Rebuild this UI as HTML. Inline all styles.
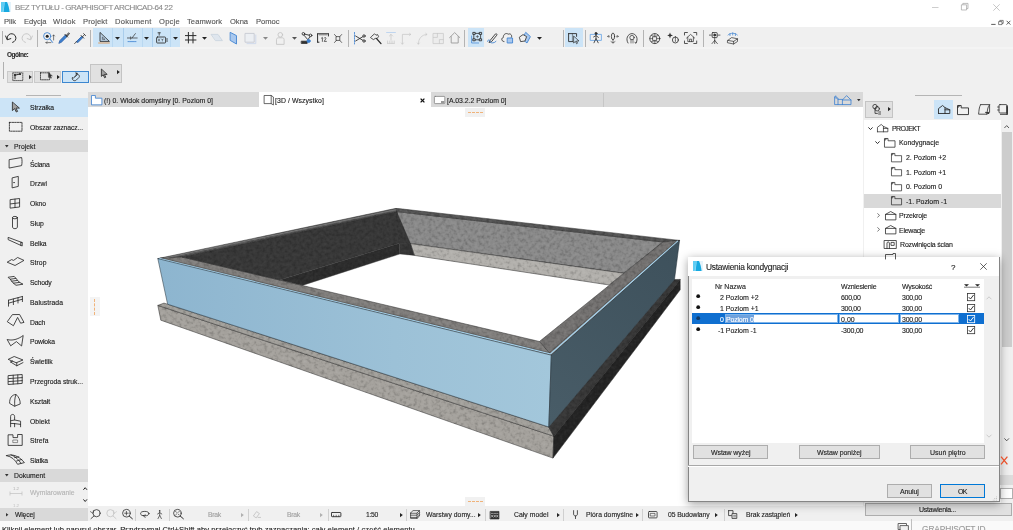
<!DOCTYPE html>
<html lang="pl"><head><meta charset="utf-8"><title>BEZ TYTUŁU - GRAPHISOFT ARCHICAD-64 22</title>
<style>
html,body{margin:0;padding:0;}
body{width:1013px;height:530px;overflow:hidden;position:relative;background:#f0f0f0;font-family:"Liberation Sans", sans-serif;}
body>div,body>svg,body>span{position:absolute;}
.t{white-space:pre;-webkit-text-stroke:0.12px currentColor;will-change:transform;}
svg{overflow:visible;}
</style></head><body>
<div style="left:0px;top:0px;width:1013px;height:27px;background:#ffffff;"></div>
<div style="left:0px;top:27px;width:1013px;height:21px;background:#f0f0f0;"></div>
<div style="left:0px;top:47.3px;width:1013px;height:2.2px;background:#f4f4f4;"></div>
<div style="left:0px;top:49px;width:1013px;height:43px;background:#f0f0f0;"></div>
<div style="left:88px;top:107px;width:775px;height:399.3px;background:#ffffff;"></div>
<div style="left:88px;top:92px;width:775px;height:15px;background:#d9d9d9;"></div>
<div style="left:259px;top:92px;width:172px;height:15px;background:#ffffff;"></div>
<div style="left:0px;top:90px;width:88px;height:432px;background:#f0f0f0;"></div>
<div style="left:863px;top:90px;width:150px;height:432px;background:#f0f0f0;"></div>
<div style="left:864px;top:120px;width:137px;height:385px;background:#ffffff;"></div>
<div style="left:1001px;top:120px;width:12px;height:385px;background:#f0f0f0;"></div>
<div style="left:88px;top:506.3px;width:775px;height:15.7px;background:#f0f0f0;"></div>
<div style="left:0px;top:520.8px;width:1013px;height:9.2px;background:#fafafa;"></div>
<span class="t" style="left:14.6px;top:2.80px;font-size:8px;line-height:9.60px;color:#8a8a8a;letter-spacing:-0.436px;">BEZ TYTUŁU - GRAPHISOFT ARCHICAD-64 22</span>
<span class="t" style="left:4px;top:16.74px;font-size:7.6px;line-height:9.12px;color:#555;letter-spacing:-0.062px;">Plik</span>
<span class="t" style="left:23.5px;top:16.74px;font-size:7.6px;line-height:9.12px;color:#555;letter-spacing:-0.049px;">Edycja</span>
<span class="t" style="left:53px;top:16.74px;font-size:7.6px;line-height:9.12px;color:#555;letter-spacing:0.378px;">Widok</span>
<span class="t" style="left:83px;top:16.74px;font-size:7.6px;line-height:9.12px;color:#555;letter-spacing:0.123px;">Projekt</span>
<span class="t" style="left:115px;top:16.74px;font-size:7.6px;line-height:9.12px;color:#555;letter-spacing:0.234px;">Dokument</span>
<span class="t" style="left:158.5px;top:16.74px;font-size:7.6px;line-height:9.12px;color:#555;letter-spacing:0.231px;">Opcje</span>
<span class="t" style="left:187.4px;top:16.74px;font-size:7.6px;line-height:9.12px;color:#555;letter-spacing:0.074px;">Teamwork</span>
<span class="t" style="left:230px;top:16.74px;font-size:7.6px;line-height:9.12px;color:#555;letter-spacing:-0.039px;">Okna</span>
<span class="t" style="left:255.6px;top:16.74px;font-size:7.6px;line-height:9.12px;color:#555;letter-spacing:-0.048px;">Pomoc</span>
<div style="left:0px;top:97.5px;width:88px;height:19px;background:#cce4f7;"></div>
<span class="t" style="left:30px;top:104.32px;font-size:6.8px;line-height:8.16px;color:#1a1a1a;letter-spacing:-0.070px;">Strzałka</span>
<span class="t" style="left:30px;top:124.32px;font-size:6.8px;line-height:8.16px;color:#1a1a1a;letter-spacing:-0.083px;">Obszar zaznacz...</span>
<div style="left:0px;top:139.8px;width:88px;height:12.4px;background:#d9d9d9;"></div>
<span class="t" style="left:14px;top:142.82px;font-size:6.8px;line-height:8.16px;color:#1a1a1a;letter-spacing:0.049px;">Projekt</span>
<span class="t" style="left:30px;top:160.62px;font-size:6.8px;line-height:8.16px;color:#1a1a1a;letter-spacing:-0.216px;">Ściana</span>
<span class="t" style="left:30px;top:180.38px;font-size:6.8px;line-height:8.16px;color:#1a1a1a;letter-spacing:0.000px;">Drzwi</span>
<span class="t" style="left:30px;top:200.14px;font-size:6.8px;line-height:8.16px;color:#1a1a1a;letter-spacing:-0.062px;">Okno</span>
<span class="t" style="left:30px;top:219.90px;font-size:6.8px;line-height:8.16px;color:#1a1a1a;letter-spacing:0.098px;">Słup</span>
<span class="t" style="left:30px;top:239.66px;font-size:6.8px;line-height:8.16px;color:#1a1a1a;letter-spacing:-0.103px;">Belka</span>
<span class="t" style="left:30px;top:259.42px;font-size:6.8px;line-height:8.16px;color:#1a1a1a;letter-spacing:0.050px;">Strop</span>
<span class="t" style="left:30px;top:279.18px;font-size:6.8px;line-height:8.16px;color:#1a1a1a;letter-spacing:-0.195px;">Schody</span>
<span class="t" style="left:30px;top:298.94px;font-size:6.8px;line-height:8.16px;color:#1a1a1a;letter-spacing:0.050px;">Balustrada</span>
<span class="t" style="left:30px;top:318.70px;font-size:6.8px;line-height:8.16px;color:#1a1a1a;letter-spacing:-0.219px;">Dach</span>
<span class="t" style="left:30px;top:338.46px;font-size:6.8px;line-height:8.16px;color:#1a1a1a;letter-spacing:-0.100px;">Powłoka</span>
<span class="t" style="left:30px;top:358.22px;font-size:6.8px;line-height:8.16px;color:#1a1a1a;letter-spacing:-0.068px;">Świetlik</span>
<span class="t" style="left:30px;top:377.98px;font-size:6.8px;line-height:8.16px;color:#1a1a1a;letter-spacing:-0.036px;">Przegroda struk...</span>
<span class="t" style="left:30px;top:397.74px;font-size:6.8px;line-height:8.16px;color:#1a1a1a;letter-spacing:-0.058px;">Kształt</span>
<span class="t" style="left:30px;top:417.50px;font-size:6.8px;line-height:8.16px;color:#1a1a1a;letter-spacing:0.057px;">Obiekt</span>
<span class="t" style="left:30px;top:437.26px;font-size:6.8px;line-height:8.16px;color:#1a1a1a;letter-spacing:0.060px;">Strefa</span>
<span class="t" style="left:30px;top:457.02px;font-size:6.8px;line-height:8.16px;color:#1a1a1a;letter-spacing:-0.148px;">Siatka</span>
<div style="left:0px;top:468.7px;width:88px;height:12.9px;background:#d9d9d9;"></div>
<div style="left:0px;top:507.9px;width:87.7px;height:12.9px;background:#d9d9d9;"></div>
<span class="t" style="left:14.1px;top:472.12px;font-size:6.8px;line-height:8.16px;color:#1a1a1a;letter-spacing:0.039px;">Dokument</span>
<span class="t" style="left:30px;top:489.22px;font-size:6.8px;line-height:8.16px;color:#b4b4b4;letter-spacing:0.007px;">Wymiarowanie</span>
<span class="t" style="left:14.5px;top:511.02px;font-size:6.8px;line-height:8.16px;color:#1a1a1a;letter-spacing:-0.151px;">Więcej</span>
<span class="t" style="left:104px;top:96.76px;font-size:6.9px;line-height:8.28px;color:#222;letter-spacing:0.018px;">(!) 0. Widok domyślny [0. Poziom 0]</span>
<span class="t" style="left:275px;top:96.76px;font-size:6.9px;line-height:8.28px;color:#222;letter-spacing:0.076px;">[3D / Wszystko]</span>
<span class="t" style="left:446.5px;top:96.76px;font-size:6.9px;line-height:8.28px;color:#222;letter-spacing:-0.034px;">[A.03.2.2 Poziom 0]</span>
<span class="t" style="left:2px;top:524.64px;font-size:7.6px;line-height:9.12px;color:#222;letter-spacing:0.048px;">Kliknij element lub narysuj obszar. Przytrzymaj Ctrl+Shift aby przełączyć tryb zaznaczania: cały element / część elementu.</span>
<svg style="left:0px;top:0px;" width="1013" height="530" viewBox="0 0 1013 530"><defs><linearGradient id="gb" gradientUnits="userSpaceOnUse" x1="158" y1="0" x2="552" y2="0"><stop offset="0" stop-color="#8db5cf"/><stop offset="0.6" stop-color="#9cc1d7"/><stop offset="1" stop-color="#a3c7db"/></linearGradient><linearGradient id="gr" gradientUnits="userSpaceOnUse" x1="550" y1="420" x2="680" y2="250"><stop offset="0" stop-color="#485c67"/><stop offset="1" stop-color="#3e515c"/></linearGradient><filter id="tex" color-interpolation-filters="sRGB" x="0" y="0" width="100%" height="100%" filterUnits="objectBoundingBox"><feTurbulence type="fractalNoise" baseFrequency="0.28" numOctaves="2" seed="7" result="n"/><feColorMatrix in="n" type="matrix" values="0 0 0 0 0  0 0 0 0 0  0 0 0 0 0  -0.5 0 0 0 0.25" result="a"/><feComposite in="a" in2="SourceGraphic" operator="in" result="d"/><feColorMatrix in="n" type="matrix" values="0 0 0 0 1  0 0 0 0 1  0 0 0 0 1  0.24 0 0 0 -0.12" result="l"/><feComposite in="l" in2="SourceGraphic" operator="in" result="l2"/><feMerge><feMergeNode in="SourceGraphic"/><feMergeNode in="d"/><feMergeNode in="l2"/></feMerge></filter><filter id="texd" color-interpolation-filters="sRGB" x="0" y="0" width="100%" height="100%"><feTurbulence type="fractalNoise" baseFrequency="0.3" numOctaves="2" seed="11" result="n"/><feColorMatrix in="n" type="matrix" values="0 0 0 0 0  0 0 0 0 0  0 0 0 0 0  -0.5 0 0 0 0.25" result="a"/><feComposite in="a" in2="SourceGraphic" operator="in" result="d"/><feColorMatrix in="n" type="matrix" values="0 0 0 0 1  0 0 0 0 1  0 0 0 0 1  0.1 0 0 0 -0.05" result="l"/><feComposite in="l" in2="SourceGraphic" operator="in" result="l2"/><feMerge><feMergeNode in="SourceGraphic"/><feMergeNode in="d"/><feMergeNode in="l2"/></feMerge></filter></defs><g filter="url(#tex)"><polygon points="157.8,305.4 553.8,436.2 553.0,458.1 160.8,320.2" fill="#a4a19c" stroke="#2a2a2a" stroke-width="0.5" stroke-linejoin="round" /><polygon points="157.8,305.4 164.0,303.1 167.6,304.2 548.8,427.0 553.8,436.2" fill="#a19f9a" stroke="#2a2a2a" stroke-width="0.5" stroke-linejoin="round" /><polygon points="396.7,211.6 663.0,242.0 623.7,273.2 410.5,243.6 399.5,243.3" fill="#898989" stroke="#2a2a2a" stroke-width="0.5" stroke-linejoin="round" /><polygon points="410.5,243.6 623.7,273.2 609.2,285.0 414.3,255.4" fill="#b2b0ac" stroke="#2a2a2a" stroke-width="0.5" stroke-linejoin="round" /><polygon points="157.8,258.6 396.2,208.3 396.7,211.6 182.0,257.0" fill="#565656" stroke="#2a2a2a" stroke-width="0.5" stroke-linejoin="round" /><polygon points="396.2,208.3 679.6,240.4 663.0,242.0 396.7,211.6" fill="#545454" stroke="#2a2a2a" stroke-width="0.5" stroke-linejoin="round" /><polygon points="551.3,355.2 679.6,240.4 663.0,242.0 539.4,341.5" fill="#737170" stroke="#2a2a2a" stroke-width="0.5" stroke-linejoin="round" /><polygon points="157.8,258.6 551.3,355.2 539.4,341.5 182.0,257.0" fill="#807e7c" stroke="#2a2a2a" stroke-width="0.5" stroke-linejoin="round" /></g><g filter="url(#texd)"><polygon points="548.8,427.0 553.8,436.2 680.2,279.4 674.5,279.5" fill="#383838" stroke="#2a2a2a" stroke-width="0.5" stroke-linejoin="round" /><polygon points="553.8,436.2 680.2,279.4 680.2,289.8 553.0,458.1" fill="#242424" stroke="#2a2a2a" stroke-width="0.5" stroke-linejoin="round" /><polygon points="182.0,257.0 396.7,211.6 399.5,243.3 279.5,279.9" fill="#383838" stroke="#2a2a2a" stroke-width="0.5" stroke-linejoin="round" /><polygon points="279.5,279.9 399.5,243.3 399.8,254.0 302.5,285.4" fill="#2d2d2d" stroke="#4a4a4a" stroke-width="0.4" stroke-linejoin="round" /><polygon points="396.7,211.6 410.5,243.6 399.5,243.3" fill="#383838" stroke="#2a2a2a" stroke-width="0.3" stroke-linejoin="round" /><polygon points="399.5,243.3 410.5,243.6 414.3,255.4 399.8,254.0" fill="#353535" stroke="#2a2a2a" stroke-width="0.3" stroke-linejoin="round" /></g><polyline points="163.9,258.2 396.4,209.6" stroke="#858585" stroke-width="0.7" fill="none"/><polyline points="159.3,258.5 550.4,353.9 678.0,240.9" stroke="#a4cfe8" stroke-width="1.4" fill="none" stroke-linejoin="round"/><polyline points="160.3,257.5 549.5,352.6 676.3,241.2" stroke="#2f2f2f" stroke-width="0.35" fill="none" stroke-linejoin="round"/><polygon points="157.8,258.6 551.3,355.2 548.8,427.0 167.6,304.2" fill="url(#gb)" stroke="#1f2a33" stroke-width="0.5" stroke-linejoin="round" /><polygon points="551.3,355.2 679.6,240.4 674.5,279.5 548.8,427.0" fill="url(#gr)" stroke="#1f2a33" stroke-width="0.5" stroke-linejoin="round" /></svg>
<div style="left:914.7px;top:95px;width:47.7px;height:0.8px;background:#b5b5b5;"></div>
<div style="left:864.5px;top:100.6px;width:28px;height:17.8px;background:#e1e1e1;border:0.5px solid #c4c4c4;box-sizing:border-box;"></div>
<div style="left:933.7px;top:99.8px;width:19.2px;height:19.2px;background:#cce4f7;"></div>
<div style="left:864px;top:194px;width:137px;height:13.5px;background:#d9d9d9;"></div>
<span class="t" style="left:892px;top:125.00px;font-size:7px;line-height:8.40px;color:#1a1a1a;letter-spacing:-0.614px;">PROJEKT</span>
<span class="t" style="left:899px;top:139.00px;font-size:7px;line-height:8.40px;color:#1a1a1a;letter-spacing:-0.044px;">Kondygnacje</span>
<span class="t" style="left:906px;top:154.00px;font-size:7px;line-height:8.40px;color:#1a1a1a;letter-spacing:-0.089px;">2. Poziom +2</span>
<span class="t" style="left:906px;top:168.50px;font-size:7px;line-height:8.40px;color:#1a1a1a;letter-spacing:-0.089px;">1. Poziom +1</span>
<span class="t" style="left:906px;top:183.10px;font-size:7px;line-height:8.40px;color:#1a1a1a;letter-spacing:-0.088px;">0. Poziom 0</span>
<span class="t" style="left:906px;top:197.50px;font-size:7px;line-height:8.40px;color:#1a1a1a;letter-spacing:-0.048px;">-1. Poziom -1</span>
<span class="t" style="left:899px;top:212.30px;font-size:7px;line-height:8.40px;color:#1a1a1a;letter-spacing:-0.175px;">Przekroje</span>
<span class="t" style="left:899px;top:226.50px;font-size:7px;line-height:8.40px;color:#1a1a1a;letter-spacing:-0.252px;">Elewacje</span>
<span class="t" style="left:899.5px;top:241.10px;font-size:7px;line-height:8.40px;color:#1a1a1a;letter-spacing:-0.167px;">Rozwinięcia ścian</span>
<div style="left:1001.5px;top:132.3px;width:10px;height:214.4px;background:#cdcdcd;"></div>
<div style="left:865px;top:502.5px;width:146.5px;height:13px;background:#e1e1e1;border:0.5px solid #adadad;box-sizing:border-box;"></div>
<span class="t" style="left:919.3px;top:505.90px;font-size:7px;line-height:8.40px;color:#1a1a1a;letter-spacing:-0.237px;">Ustawienia...</span>
<span class="t" style="left:922.3px;top:523.86px;font-size:8.4px;line-height:10.08px;color:#9a9a9a;letter-spacing:-0.123px;">GRAPHISOFT ID</span>
<div style="left:911.3px;top:519px;width:0.7px;height:11px;background:#c0c0c0;"></div>
<div style="left:1000px;top:474.5px;width:13px;height:10px;background:#dcdcdc;"></div>
<div style="left:1000px;top:487.5px;width:13px;height:11px;background:#ffffff;border:0.5px solid #b0b0b0;box-sizing:border-box;"></div>
<span class="t" style="left:207.7px;top:510.82px;font-size:6.8px;line-height:8.16px;color:#a0a0a0;letter-spacing:-0.246px;">Brak</span>
<span class="t" style="left:287px;top:510.82px;font-size:6.8px;line-height:8.16px;color:#a0a0a0;letter-spacing:-0.246px;">Brak</span>
<span class="t" style="left:366.2px;top:510.82px;font-size:6.8px;line-height:8.16px;color:#222;letter-spacing:-0.309px;">1:50</span>
<span class="t" style="left:426px;top:510.82px;font-size:6.8px;line-height:8.16px;color:#222;letter-spacing:0.014px;">Warstwy domy...</span>
<span class="t" style="left:514px;top:510.82px;font-size:6.8px;line-height:8.16px;color:#222;letter-spacing:0.050px;">Cały model</span>
<span class="t" style="left:586px;top:510.82px;font-size:6.8px;line-height:8.16px;color:#222;letter-spacing:0.010px;">Pióra domyślne</span>
<span class="t" style="left:668px;top:510.82px;font-size:6.8px;line-height:8.16px;color:#222;letter-spacing:-0.100px;">05 Budowlany</span>
<span class="t" style="left:745.8px;top:510.82px;font-size:6.8px;line-height:8.16px;color:#222;letter-spacing:-0.055px;">Brak zastąpień</span>
<div style="left:135.4px;top:508.5px;width:0.7px;height:12px;background:#d0d0d0;"></div>
<div style="left:169.3px;top:508.5px;width:0.7px;height:12px;background:#d0d0d0;"></div>
<div style="left:247.9px;top:508.5px;width:0.7px;height:12px;background:#d0d0d0;"></div>
<div style="left:327.6px;top:508.5px;width:0.7px;height:12px;background:#d0d0d0;"></div>
<div style="left:406.2px;top:508.5px;width:0.7px;height:12px;background:#d0d0d0;"></div>
<div style="left:485px;top:508.5px;width:0.7px;height:12px;background:#d0d0d0;"></div>
<div style="left:563.4px;top:508.5px;width:0.7px;height:12px;background:#d0d0d0;"></div>
<div style="left:642px;top:508.5px;width:0.7px;height:12px;background:#d0d0d0;"></div>
<div style="left:723.6px;top:508.5px;width:0.7px;height:12px;background:#d0d0d0;"></div>
<div style="left:687.5px;top:256.5px;width:312px;height:245px;background:#f0f0f0;border:0.8px solid #858585;box-sizing:border-box;box-shadow:0 2px 9px rgba(0,0,0,0.38);"></div>
<div style="left:688.3px;top:257.3px;width:310.4px;height:18.7px;background:#ffffff;"></div>
<svg style="left:692.8px;top:261.2px;" width="10" height="10" viewBox="0 0 10 10"><rect x="0" y="0" width="10" height="10" fill="#e4f3fb"/><path d="M0 0H3.8L1.6 10H0Z" fill="#5fcdf4"/><path d="M3.8 0H6C7.4 3 8.2 6.4 8.6 10H1.6Z" fill="#17a9e0"/><path d="M3.8 0L2.6 10H1.6Z" fill="#9be2fa"/></svg>
<span class="t" style="left:705.8px;top:262.16px;font-size:8.4px;line-height:10.08px;color:#222;letter-spacing:-0.242px;">Ustawienia kondygnacji</span>
<span class="t" style="left:951.4px;top:262.90px;font-size:8px;line-height:9.60px;color:#222;">?</span>
<svg style="left:980px;top:263.3px;" width="7" height="7" viewBox="0 0 7 7"><path d="M0.3 0.3L6.7 6.7M6.7 0.3L0.3 6.7" stroke="#222" stroke-width="0.7" fill="none"/></svg>
<div style="left:692px;top:279px;width:292px;height:163.5px;background:#ffffff;"></div>
<span class="t" style="left:715px;top:282.70px;font-size:7px;line-height:8.40px;color:#222;letter-spacing:0.008px;">Nr Nazwa</span>
<span class="t" style="left:841.2px;top:282.70px;font-size:7px;line-height:8.40px;color:#222;letter-spacing:-0.214px;">Wzniesienie</span>
<span class="t" style="left:901.9px;top:282.70px;font-size:7px;line-height:8.40px;color:#222;letter-spacing:-0.218px;">Wysokość</span>
<svg style="left:964px;top:283px;" width="16" height="5" viewBox="0 0 16 5"><path d="M0 1.2H5L2.5 3.4ZM11 1.2H16L13.5 3.4Z" fill="#222"/><path d="M0 4.2H16" stroke="#222" stroke-width="0.6"/></svg>
<div style="left:692px;top:313.3px;width:292px;height:10.6px;background:#0f6fd0;"></div>
<div style="left:724.5px;top:313.8px;width:113.5px;height:9.6px;background:#ffffff;border:0.5px solid #7eb4ea;box-sizing:border-box;"></div>
<div style="left:839px;top:313.8px;width:59.5px;height:9.6px;background:#ffffff;border:0.5px solid #7eb4ea;box-sizing:border-box;"></div>
<div style="left:900px;top:313.8px;width:58.5px;height:9.6px;background:#ffffff;border:0.5px solid #7eb4ea;box-sizing:border-box;"></div>
<div style="left:725.5px;top:315px;width:28.5px;height:7.6px;background:#6fa2dd;"></div>
<span class="t" style="left:720px;top:315.90px;font-size:7px;line-height:8.40px;color:#ffffff;">0</span>
<span class="t" style="left:725.8px;top:315.90px;font-size:7px;line-height:8.40px;color:#ffffff;letter-spacing:-0.186px;">Poziom 0</span>
<svg style="left:696px;top:294.40000000000003px;" width="4.4" height="4.4" viewBox="0 0 4.4 4.4"><circle cx="2.2" cy="2.2" r="1.9" fill="#111"/></svg>
<span class="t" style="left:719.5px;top:294.00px;font-size:7px;line-height:8.40px;color:#222;letter-spacing:-0.055px;">2 Poziom +2</span>
<span class="t" style="left:841.2px;top:294.00px;font-size:7px;line-height:8.40px;color:#222;letter-spacing:-0.320px;">600,00</span>
<span class="t" style="left:901.9px;top:294.00px;font-size:7px;line-height:8.40px;color:#222;letter-spacing:-0.254px;">300,00</span>
<svg style="left:967.2px;top:293.2px;" width="8.2" height="8.2" viewBox="0 0 8.2 8.2"><rect x="0.5" y="0.5" width="7.2" height="7.2" fill="#fff" stroke="#333" stroke-width="0.8"/><path d="M1.8 4.2L3.5 6L6.6 2" stroke="#333" stroke-width="1" fill="none"/></svg>
<svg style="left:696px;top:305.40000000000003px;" width="4.4" height="4.4" viewBox="0 0 4.4 4.4"><circle cx="2.2" cy="2.2" r="1.9" fill="#111"/></svg>
<span class="t" style="left:719.5px;top:305.00px;font-size:7px;line-height:8.40px;color:#222;letter-spacing:-0.055px;">1 Poziom +1</span>
<span class="t" style="left:841.2px;top:305.00px;font-size:7px;line-height:8.40px;color:#222;letter-spacing:-0.320px;">300,00</span>
<span class="t" style="left:901.9px;top:305.00px;font-size:7px;line-height:8.40px;color:#222;letter-spacing:-0.254px;">300,00</span>
<svg style="left:967.2px;top:304.2px;" width="8.2" height="8.2" viewBox="0 0 8.2 8.2"><rect x="0.5" y="0.5" width="7.2" height="7.2" fill="#fff" stroke="#333" stroke-width="0.8"/><path d="M1.8 4.2L3.5 6L6.6 2" stroke="#333" stroke-width="1" fill="none"/></svg>
<svg style="left:696px;top:316.3px;" width="4.4" height="4.4" viewBox="0 0 4.4 4.4"><circle cx="2.2" cy="2.2" r="1.9" fill="#123a66"/></svg>
<span class="t" style="left:841.2px;top:315.90px;font-size:7px;line-height:8.40px;color:#222;letter-spacing:0.044px;">0,00</span>
<span class="t" style="left:901.9px;top:315.90px;font-size:7px;line-height:8.40px;color:#222;letter-spacing:-0.254px;">300,00</span>
<svg style="left:967.2px;top:315.09999999999997px;" width="8.2" height="8.2" viewBox="0 0 8.2 8.2"><rect x="0.5" y="0.5" width="7.2" height="7.2" fill="none" stroke="#ffffff" stroke-width="0.8"/><path d="M1.8 4.2L3.5 6L6.6 2" stroke="#ffffff" stroke-width="1" fill="none"/></svg>
<svg style="left:696px;top:327.1px;" width="4.4" height="4.4" viewBox="0 0 4.4 4.4"><circle cx="2.2" cy="2.2" r="1.9" fill="#111"/></svg>
<span class="t" style="left:717.5px;top:326.70px;font-size:7px;line-height:8.40px;color:#222;letter-spacing:-0.099px;">-1 Poziom -1</span>
<span class="t" style="left:841.2px;top:326.70px;font-size:7px;line-height:8.40px;color:#222;letter-spacing:-0.207px;">-300,00</span>
<span class="t" style="left:901.9px;top:326.70px;font-size:7px;line-height:8.40px;color:#222;letter-spacing:-0.254px;">300,00</span>
<svg style="left:967.2px;top:325.9px;" width="8.2" height="8.2" viewBox="0 0 8.2 8.2"><rect x="0.5" y="0.5" width="7.2" height="7.2" fill="#fff" stroke="#333" stroke-width="0.8"/><path d="M1.8 4.2L3.5 6L6.6 2" stroke="#333" stroke-width="1" fill="none"/></svg>
<svg style="left:986px;top:295.5px;" width="6" height="4" viewBox="0 0 6 4"><path d="M0.5 3.3L3 0.8L5.5 3.3" stroke="#b0b0b0" stroke-width="0.6" fill="none"/></svg>
<svg style="left:986px;top:434px;" width="6" height="4" viewBox="0 0 6 4"><path d="M0.5 0.7L3 3.2L5.5 0.7" stroke="#b0b0b0" stroke-width="0.6" fill="none"/></svg>
<div style="left:693.3px;top:444.8px;width:74.90000000000009px;height:14.2px;background:#e1e1e1;border:0.6px solid #adadad;box-sizing:border-box;"></div>
<span class="t" style="left:711px;top:448.80px;font-size:7px;line-height:8.40px;color:#222;letter-spacing:-0.096px;">Wstaw wyżej</span>
<div style="left:799.3px;top:444.8px;width:80.40000000000009px;height:14.2px;background:#e1e1e1;border:0.6px solid #adadad;box-sizing:border-box;"></div>
<span class="t" style="left:817.3px;top:448.80px;font-size:7px;line-height:8.40px;color:#222;letter-spacing:-0.049px;">Wstaw poniżej</span>
<div style="left:910.4px;top:444.8px;width:74.30000000000007px;height:14.2px;background:#e1e1e1;border:0.6px solid #adadad;box-sizing:border-box;"></div>
<span class="t" style="left:929.6px;top:448.80px;font-size:7px;line-height:8.40px;color:#222;letter-spacing:-0.018px;">Usuń piętro</span>
<div style="left:688px;top:465.3px;width:311px;height:0.7px;background:#a8a8a8;"></div>
<div style="left:688px;top:466px;width:311px;height:0.7px;background:#ffffff;"></div>
<div style="left:887px;top:484px;width:44.8px;height:14px;background:#e1e1e1;border:0.6px solid #adadad;box-sizing:border-box;"></div>
<span class="t" style="left:900px;top:487.70px;font-size:7px;line-height:8.40px;color:#222;letter-spacing:-0.128px;">Anuluj</span>
<div style="left:940px;top:484px;width:44.7px;height:14px;background:#e1e1e1;border:1.1px solid #0078d7;box-sizing:border-box;"></div>
<span class="t" style="left:958px;top:487.70px;font-size:7px;line-height:8.40px;color:#222;letter-spacing:-0.663px;">OK</span>
<svg style="left:992px;top:495.5px;" width="5" height="5" viewBox="0 0 5 5"><path d="M4 0.5h0.8v0.8H4zM2.4 2.1h0.8v0.8H2.4zM4 2.1h0.8v0.8H4zM0.8 3.7h0.8v0.8H0.8zM2.4 3.7h0.8v0.8H2.4zM4 3.7h0.8v0.8H4z" fill="#b8b8b8"/></svg>
<div style="left:26px;top:95px;width:35px;height:0.8px;background:#b5b5b5;"></div>
<svg style="left:11.7px;top:101.8px;" width="8" height="10.5" viewBox="0 0 8 10.5"><g fill="none" stroke="#2b2b2b" stroke-width="0.85" stroke-linejoin="round" stroke-linecap="round"><path d="M0.4 0.4V8.6L2.6 6.6L4.3 10L5.6 9.4L4 6.1H7Z" fill="#a2a2a2"/></g></svg>
<svg style="left:9px;top:122.2px;" width="13.5" height="9.6" viewBox="0 0 13.5 9.6"><g fill="none" stroke="#2b2b2b" stroke-width="0.85" stroke-linejoin="round" stroke-linecap="round"><rect x="0.4" y="0.4" width="12.6" height="8.8" stroke-dasharray="1.6 1"/></g></svg>
<svg style="left:5.2px;top:144.6px;" width="3.6" height="2.4" viewBox="0 0 3.6 2.4"><path d="M0 0H3.6L1.8 2.4Z" fill="#333"/></svg>
<svg style="left:5.2px;top:474px;" width="3.6" height="2.4" viewBox="0 0 3.6 2.4"><path d="M0 0H3.6L1.8 2.4Z" fill="#333"/></svg>
<svg style="left:6px;top:513px;" width="2.4" height="3.6" viewBox="0 0 2.4 3.6"><path d="M0 0V3.6L2.4 1.8Z" fill="#333"/></svg>
<svg style="left:9px;top:157px;" width="13.6" height="11.5" viewBox="0 0 13.6 11.5"><g fill="none" stroke="#2b2b2b" stroke-width="0.85" stroke-linejoin="round" stroke-linecap="round"><path d="M0.5 2.6L12.6 0.5C13.2 3 13.2 6 12.6 8.6L0.5 11Z"/></g></svg>
<svg style="left:12.2px;top:176px;" width="7" height="12.2" viewBox="0 0 7 12.2"><g fill="none" stroke="#2b2b2b" stroke-width="0.85" stroke-linejoin="round" stroke-linecap="round"><path d="M0.5 1.8L6.3 0.4V10.4L0.5 11.8Z"/><path d="M1.6 6.6H2.6"/></g></svg>
<svg style="left:9.8px;top:197.8px;" width="10.2" height="10.6" viewBox="0 0 10.2 10.6"><g fill="none" stroke="#2b2b2b" stroke-width="0.85" stroke-linejoin="round" stroke-linecap="round"><path d="M0.5 1.6L9.6 0.5V9L0.5 10.1Z"/><path d="M5 1.1V9.5M0.5 5.9L9.6 4.8"/></g></svg>
<svg style="left:12.2px;top:216.4px;" width="6" height="13.4" viewBox="0 0 6 13.4"><g fill="none" stroke="#2b2b2b" stroke-width="0.85" stroke-linejoin="round" stroke-linecap="round"><path d="M0.5 1.6V11.2C0.5 13.2 5.4 13.2 5.4 11.2V1.6"/><ellipse cx="2.95" cy="1.6" rx="2.45" ry="1.2"/></g></svg>
<svg style="left:8px;top:237.4px;" width="14.8" height="9.4" viewBox="0 0 14.8 9.4"><g fill="none" stroke="#2b2b2b" stroke-width="0.85" stroke-linejoin="round" stroke-linecap="round"><path d="M0.5 0.5L14.2 5.6V9L0.5 2.8Z"/><path d="M14.2 5.6L12.8 5.2V8.4"/></g></svg>
<svg style="left:6.6px;top:257px;" width="17.6" height="8.8" viewBox="0 0 17.6 8.8"><g fill="none" stroke="#2b2b2b" stroke-width="0.85" stroke-linejoin="round" stroke-linecap="round"><path d="M0.5 5L4.6 2.6L6.6 3.4L10.6 0.5L17 3.4L8.4 8.3Z"/></g></svg>
<svg style="left:7.5px;top:275.6px;" width="15.6" height="9.8" viewBox="0 0 15.6 9.8"><g fill="none" stroke="#2b2b2b" stroke-width="0.85" stroke-linejoin="round" stroke-linecap="round"><path d="M0.5 1.2L6.2 0.4L8 2.4L2.4 3.2ZM2.4 3.2L3.6 5.2L9.6 4.4L8 2.4M3.6 5.2L5.4 7.2L11.6 6.4L9.6 4.4M5.4 7.2L8 9.3L15 8.2L11.6 6.4"/></g></svg>
<svg style="left:8px;top:296px;" width="15" height="10.8" viewBox="0 0 15 10.8"><g fill="none" stroke="#2b2b2b" stroke-width="0.85" stroke-linejoin="round" stroke-linecap="round"><path d="M0.5 4.2L14.4 0.5M0.5 7.2L14.4 3.2M0.5 4.2V10.2M5.4 3V8.6M10 1.8V7M14.4 0.5V5.6"/></g></svg>
<svg style="left:6.6px;top:314.4px;" width="17.6" height="12" viewBox="0 0 17.6 12"><g fill="none" stroke="#2b2b2b" stroke-width="0.85" stroke-linejoin="round" stroke-linecap="round"><path d="M0.5 7.4L5.4 0.6L12.6 0.5L17 8.4L13.6 9.2L10.6 3.4L6.6 11.4Z"/></g></svg>
<svg style="left:7px;top:335.2px;" width="16.8" height="11.6" viewBox="0 0 16.8 11.6"><g fill="none" stroke="#2b2b2b" stroke-width="0.85" stroke-linejoin="round" stroke-linecap="round"><path d="M0.5 4.6C5 6 11 4.4 16.2 0.5L14.6 11L9.4 6.6L4 10.6Z"/></g></svg>
<svg style="left:7.5px;top:355.8px;" width="15.6" height="10.4" viewBox="0 0 15.6 10.4"><g fill="none" stroke="#2b2b2b" stroke-width="0.85" stroke-linejoin="round" stroke-linecap="round"><path d="M0.5 3.2L6.2 0.5L15 4L8.6 6.6ZM2.6 6L8.8 9.8L15 6.6M2.6 6L4.6 5M8.8 9.8V6.6"/></g></svg>
<svg style="left:8px;top:374.4px;" width="14.8" height="11" viewBox="0 0 14.8 11"><g fill="none" stroke="#2b2b2b" stroke-width="0.85" stroke-linejoin="round" stroke-linecap="round"><path d="M0.5 1.6L14.2 0.5V9.4L0.5 10.5ZM5.2 1.2V10.1M9.8 0.9V9.8M0.5 4.6L14.2 3.6M0.5 7.6L14.2 6.6"/></g></svg>
<svg style="left:9.4px;top:394px;" width="11.8" height="12.6" viewBox="0 0 11.8 12.6"><g fill="none" stroke="#2b2b2b" stroke-width="0.85" stroke-linejoin="round" stroke-linecap="round"><path d="M0.6 9C0.4 4 3 0.6 7 0.5C10 3 11.4 6.4 11.2 10L5.8 12.1Z"/><path d="M7 0.5C5.6 4 5.4 8 5.8 12.1"/></g></svg>
<svg style="left:9.8px;top:413.6px;" width="11.2" height="13.4" viewBox="0 0 11.2 13.4"><g fill="none" stroke="#2b2b2b" stroke-width="0.85" stroke-linejoin="round" stroke-linecap="round"><path d="M0.6 12.8V2.4C0.6 -0.2 4.6 -0.2 4.6 2.4V6L10.6 7.2V12.8M4.6 6L0.6 6.8M4.6 9.6V12.8M4.6 9.6L10.6 10.4M0.6 9.4L4.6 9.6"/></g></svg>
<svg style="left:8px;top:433.8px;" width="14.8" height="12" viewBox="0 0 14.8 12"><g fill="none" stroke="#2b2b2b" stroke-width="0.85" stroke-linejoin="round" stroke-linecap="round"><path d="M0.5 0.8H5V3.6H9.6V0.5H14.2V11.4H0.5Z"/><rect x="5.2" y="6" width="4.4" height="2.6" stroke-width="0.5"/></g></svg>
<svg style="left:5.6px;top:454px;" width="19" height="10.8" viewBox="0 0 19 10.8"><g fill="none" stroke="#2b2b2b" stroke-width="0.85" stroke-linejoin="round" stroke-linecap="round"><path d="M0.5 1.6C6 0 12 1 18.4 8.6L11.6 10.3C9 5.6 5.6 2.6 0.5 1.6ZM5 0.8C9.6 2.6 13 6 15 9.4M8.6 3.6L12.8 2.8M10.6 7L15.8 5.4"/></g></svg>
<svg style="left:9px;top:486px;" width="14" height="12" viewBox="0 0 14 12"><g stroke="#b8b8b8" stroke-width="0.6" fill="none"><path d="M1 7.5H13M1 5.5V9.5M13 5.5V9.5"/></g><text x="7" y="4.4" font-size="4.4" text-anchor="middle" fill="#b0b0b0" font-family="Liberation Sans, sans-serif">1.2</text></svg>
<svg style="left:9px;top:498.5px;" width="14" height="6" viewBox="0 0 14 6"><text x="7" y="8" font-size="4.4" text-anchor="middle" fill="#c0c0c0" font-family="Liberation Sans, sans-serif">1.2</text></svg>
<svg style="left:83px;top:486.8px;" width="4.4" height="3.2" viewBox="0 0 4.4 3.2"><path d="M0.4 2.8L2.2 0.7L4 2.8" stroke="#222" stroke-width="1" fill="none"/></svg>
<svg style="left:83px;top:499.4px;" width="4.4" height="3.2" viewBox="0 0 4.4 3.2"><path d="M0.4 0.4L2.2 2.5L4 0.4" stroke="#222" stroke-width="1" fill="none"/></svg>
<div style="left:2.4px;top:30.5px;width:0.7px;height:13.5px;background:#b0b0b0;"></div>
<div style="left:36.5px;top:30px;width:0.8px;height:16.5px;background:#b4b4b4;"></div>
<div style="left:89.8px;top:30px;width:0.8px;height:16.5px;background:#b4b4b4;"></div>
<div style="left:348px;top:30px;width:0.8px;height:16.5px;background:#b4b4b4;"></div>
<div style="left:464px;top:30px;width:0.8px;height:16.5px;background:#b4b4b4;"></div>
<div style="left:563.3px;top:30px;width:0.8px;height:16.5px;background:#b4b4b4;"></div>
<div style="left:584.8px;top:30px;width:0.8px;height:16.5px;background:#b4b4b4;"></div>
<div style="left:643.3px;top:30px;width:0.8px;height:16.5px;background:#b4b4b4;"></div>
<div style="left:702.6px;top:30px;width:0.8px;height:16.5px;background:#b4b4b4;"></div>
<div style="left:93.2px;top:28.4px;width:87.3px;height:18.8px;background:#cce4f7;"></div>
<div style="left:112.3px;top:28.4px;width:0.6px;height:18.8px;background:#b9d8f1;"></div>
<div style="left:141.6px;top:28.4px;width:0.6px;height:18.8px;background:#b9d8f1;"></div>
<div style="left:170px;top:28.4px;width:0.6px;height:18.8px;background:#b9d8f1;"></div>
<div style="left:122.5px;top:28.4px;width:0.6px;height:18.8px;background:#a9cdec;"></div>
<div style="left:151.8px;top:28.4px;width:0.6px;height:18.8px;background:#a9cdec;"></div>
<div style="left:468px;top:28.4px;width:15.8px;height:18.8px;background:#cce4f7;"></div>
<div style="left:565px;top:28.4px;width:18.2px;height:18.8px;background:#cce4f7;"></div>
<svg style="left:5px;top:32.8px;" width="12" height="10" viewBox="0 0 12 10"><g fill="none" stroke="#2b2b2b" stroke-width="1.0" stroke-linejoin="round" stroke-linecap="round"><path d="M2.3 6.4A4.4 4.4 0 1 1 7.6 9.4M0.6 3L2.2 6.8L5.8 5.6"/></g></svg>
<svg style="left:21px;top:32.8px;" width="12" height="10" viewBox="0 0 12 10"><g fill="none" stroke="#c8c8c8" stroke-width="1.0" stroke-linejoin="round" stroke-linecap="round"><path d="M9.7 6.4A4.4 4.4 0 1 0 4.4 9.4M11.4 3L9.8 6.8L6.2 5.6"/></g></svg>
<svg style="left:42.6px;top:32.4px;" width="12" height="11.6" viewBox="0 0 12 11.6"><g fill="none" stroke="#2b2b2b" stroke-width="0.85" stroke-linejoin="round" stroke-linecap="round"><circle cx="4.2" cy="4.2" r="3.6" stroke="#3a7fd0"/><circle cx="4.2" cy="4.2" r="1.5" fill="#222" stroke="none"/><path d="M6.8 6.8L9.6 10.4" stroke="#3a7fd0" stroke-width="1"/><path d="M10.6 3V8M9.6 4L10.6 3L11.6 4M3 10.6H8M4 9.6L3 10.6L4 11.6" stroke-width="0.6"/></g></svg>
<svg style="left:58px;top:32.2px;" width="12" height="12" viewBox="0 0 12 12"><g fill="none" stroke="#2b2b2b" stroke-width="0.85" stroke-linejoin="round" stroke-linecap="round"><path d="M1 11L2 8.4L7.4 3L9 4.6L3.6 10Z" fill="#3a7fd0" stroke="#2a5fa8"/><path d="M7 2.4L9.6 5M8.2 3.6L10.2 1.2C11 0.4 12 1.6 11 2.4L8.8 4.4" stroke-width="1"/></g></svg>
<svg style="left:74px;top:32.2px;" width="12" height="12" viewBox="0 0 12 12"><g fill="none" stroke="#2b2b2b" stroke-width="0.85" stroke-linejoin="round" stroke-linecap="round"><path d="M2.6 9.4L7.6 4.4L8.8 5.6L3.8 10.6Z" fill="#3a7fd0" stroke="#2a5fa8"/><path d="M0.6 11.6L2.8 9.4M7 3.4L9.8 6.2M8.4 4.8L10.6 2.6M9.6 1.6L11.6 3.6" stroke-width="0.8"/></g></svg>
<svg style="left:97.5px;top:32.4px;" width="12" height="11.4" viewBox="0 0 12 11.4"><g fill="none" stroke="#2b2b2b" stroke-width="0.85" stroke-linejoin="round" stroke-linecap="round"><path d="M2 0.8V9.4H11Z" fill="#b8cfe4"/><path d="M4.4 5.4V7.4H6.6Z" stroke-width="0.5"/><path d="M0.6 11H11.4" stroke="#e08a3c" stroke-width="0.8"/></g></svg>
<svg style="left:114.8px;top:36.8px;" width="5" height="2.8" viewBox="0 0 5 2.8"><path d="M0 0H5L2.5 2.8Z" fill="#222"/></svg>
<svg style="left:127.4px;top:33px;" width="10.6" height="10.6" viewBox="0 0 10.6 10.6"><g fill="none" stroke="#2b2b2b" stroke-width="0.85" stroke-linejoin="round" stroke-linecap="round"><path d="M0.4 5H10.2M5 5L8.4 0.6" stroke-width="0.7"/><path d="M1 8.6H9.6" stroke="#3a7fd0" stroke-dasharray="1.4 0.8" stroke-width="0.8"/><path d="M3.6 3.8V6.2" stroke-width="0.6"/></g></svg>
<svg style="left:144px;top:36.8px;" width="5" height="2.8" viewBox="0 0 5 2.8"><path d="M0 0H5L2.5 2.8Z" fill="#222"/></svg>
<svg style="left:155.8px;top:32.2px;" width="12" height="12" viewBox="0 0 12 12"><g fill="none" stroke="#2b2b2b" stroke-width="0.85" stroke-linejoin="round" stroke-linecap="round"><rect x="0.6" y="5" width="9" height="6" rx="0.8"/><path d="M2 0.8H4.4M3.2 0.8V3.2M10.6 7H11.6M10.6 9H11.6" stroke-width="0.8"/><path d="M2.4 7L3.6 9M3.6 7L2.4 9M5.6 7L6.4 8L7.2 7M6.4 8V9" stroke-width="0.5"/></g></svg>
<svg style="left:173px;top:36.8px;" width="5" height="2.8" viewBox="0 0 5 2.8"><path d="M0 0H5L2.5 2.8Z" fill="#222"/></svg>
<svg style="left:184.6px;top:32.4px;" width="11.4" height="11.4" viewBox="0 0 11.4 11.4"><g fill="none" stroke="#2b2b2b" stroke-width="0.85" stroke-linejoin="round" stroke-linecap="round"><path d="M3.4 0.4V11M8 0.4V11M0.4 3.6H11M0.4 8H11" stroke-width="1"/></g></svg>
<svg style="left:202px;top:36.8px;" width="5" height="2.8" viewBox="0 0 5 2.8"><path d="M0 0H5L2.5 2.8Z" fill="#222"/></svg>
<svg style="left:211.3px;top:34.4px;" width="11.8" height="7" viewBox="0 0 11.8 7"><g fill="none" stroke="#2b2b2b" stroke-width="0.85" stroke-linejoin="round" stroke-linecap="round"><path d="M0.4 0.4H7L11.4 6.6H4.8Z" fill="#dfe6ee" stroke="#c9d3de"/></g></svg>
<svg style="left:229.8px;top:32px;" width="7" height="12.4" viewBox="0 0 7 12.4"><g fill="none" stroke="#2b2b2b" stroke-width="0.85" stroke-linejoin="round" stroke-linecap="round"><path d="M0.5 0.5L6.5 3.6V12L0.5 8.6Z" fill="#a9c8ee" stroke="#3a7fd0"/></g></svg>
<svg style="left:245px;top:32.6px;" width="11.2" height="11" viewBox="0 0 11.2 11"><g fill="none" stroke="#2b2b2b" stroke-width="0.85" stroke-linejoin="round" stroke-linecap="round"><rect x="0.4" y="0.4" width="8.8" height="8.8" fill="#eceff3" stroke="#c4c8d0"/><path d="M2 10.6H10.8V2" stroke="#c9d5ea"/></g></svg>
<svg style="left:262.6px;top:36.8px;" width="5" height="2.8" viewBox="0 0 5 2.8"><path d="M0 0H5L2.5 2.8Z" fill="#888"/></svg>
<svg style="left:275.8px;top:32px;" width="8.6" height="12.4" viewBox="0 0 8.6 12.4"><g fill="none" stroke="#2b2b2b" stroke-width="0.85" stroke-linejoin="round" stroke-linecap="round"><circle cx="4.3" cy="2.8" r="2.3" stroke="#c4c4c4"/><path d="M0.5 12V7.6C0.5 6.4 1.4 5.8 2.4 5.8H6.2C7.2 5.8 8.1 6.4 8.1 7.6V12Z" stroke="#c4c4c4"/></g></svg>
<svg style="left:291.6px;top:36.8px;" width="5" height="2.8" viewBox="0 0 5 2.8"><path d="M0 0H5L2.5 2.8Z" fill="#555"/></svg>
<svg style="left:300.5px;top:32.2px;" width="12" height="12" viewBox="0 0 12 12"><g fill="none" stroke="#2b2b2b" stroke-width="0.85" stroke-linejoin="round" stroke-linecap="round"><circle cx="2.4" cy="1.8" r="1.3"/><circle cx="9.6" cy="3.4" r="1.3"/><path d="M3.6 2.2L8.4 3.2M2.8 3L6.6 7.4M9 4.6L7 7.6"/><path d="M0.6 9.2H6.2V11.4H0.6Z" fill="#333"/><circle cx="7.6" cy="9" r="1.6" fill="#3a7fd0" stroke="#3a7fd0"/></g></svg>
<svg style="left:316.5px;top:33.2px;" width="12" height="9.6" viewBox="0 0 12 9.6"><g fill="none" stroke="#2b2b2b" stroke-width="0.85" stroke-linejoin="round" stroke-linecap="round"><path d="M0.6 0.8H11.4M0.6 0.8V9.2M11.4 0.8V3M0.6 9.2H2" stroke-width="1"/><path d="M3 1V2.4M5 1V2.4M7 1V2.4M9 1V2.4" stroke-width="0.5"/><path d="M4.4 5.2L5.4 4.4V8.4M7.2 5C7.8 4 9.4 4.4 8.8 5.8L7.2 8.4H9.4" stroke-width="0.7"/></g></svg>
<svg style="left:334.4px;top:33.6px;" width="8.2" height="9" viewBox="0 0 8.2 9"><g fill="none" stroke="#2b2b2b" stroke-width="0.85" stroke-linejoin="round" stroke-linecap="round"><path d="M0.5 0.5L7.7 8.5M7.7 0.5L0.5 8.5" stroke-width="0.7"/><rect x="2.4" y="2.6" width="3.4" height="3.8" fill="#f0f0f0" stroke-width="0.7"/></g></svg>
<svg style="left:354px;top:32px;" width="11.4" height="12.4" viewBox="0 0 11.4 12.4"><g fill="none" stroke="#2b2b2b" stroke-width="0.85" stroke-linejoin="round" stroke-linecap="round"><path d="M0.5 0.4V12" stroke="#3a7fd0" stroke-dasharray="1.6 1" stroke-width="0.8"/><path d="M1.6 4L9 8.4M1.6 9L9 4.6"/><circle cx="10" cy="9" r="1.2"/><circle cx="10" cy="4" r="1.2"/></g></svg>
<svg style="left:369.8px;top:32.6px;" width="11.4" height="11.4" viewBox="0 0 11.4 11.4"><g fill="none" stroke="#2b2b2b" stroke-width="0.85" stroke-linejoin="round" stroke-linecap="round"><path d="M2 3L4.6 0.8L6 2.2L7.6 1.6L8.6 3.6L7 5.6L5.4 5.4L3.4 6.6L0.8 4.8Z" stroke-width="0.8"/><path d="M6.4 5.4L11 10.6" stroke-width="1.3"/></g></svg>
<svg style="left:386px;top:32.4px;" width="10" height="12" viewBox="0 0 10 12"><g fill="none" stroke="#c6c6c6" stroke-width="0.7" stroke-linejoin="round" stroke-linecap="round"><path d="M0.6 0.5H9.4" stroke="#a9c8ee"/><path d="M5 2.4V8M3.4 4L5 2.4L6.6 4"/><path d="M1.6 11.4V9M3.8 11.4V9M6 11.4V9M8.2 11.4V9M1.6 11.4H8.2"/></g></svg>
<svg style="left:401.2px;top:32.6px;" width="10.2" height="11.4" viewBox="0 0 10.2 11.4"><g fill="none" stroke="#c6c6c6" stroke-width="0.7" stroke-linejoin="round" stroke-linecap="round"><path d="M1.4 11V1.4H9.6M8.6 0.4L9.8 1.4L8.6 2.4M0.4 10L1.4 11.2L2.4 10"/></g></svg>
<svg style="left:416.8px;top:32.6px;" width="10.6" height="11.4" viewBox="0 0 10.6 11.4"><g fill="none" stroke="#c6c6c6" stroke-width="0.7" stroke-linejoin="round" stroke-linecap="round"><path d="M1.4 11C1.4 5.6 4.6 1.8 9.8 1.4M8.8 0.4L10 1.4L8.8 2.4M0.4 10L1.4 11.2L2.4 10"/></g></svg>
<svg style="left:433.4px;top:32.6px;" width="10.8" height="11.2" viewBox="0 0 10.8 11.2"><g fill="none" stroke="#c6c6c6" stroke-width="0.7" stroke-linejoin="round" stroke-linecap="round"><rect x="0.4" y="0.4" width="10" height="10.2" fill="#ececec"/><path d="M0.4 4.4H4.4V0.4M6.4 10.6V6.6H10.4"/></g></svg>
<svg style="left:448.8px;top:32.4px;" width="11.4" height="11.6" viewBox="0 0 11.4 11.6"><g fill="none" stroke="#9a9a9a" stroke-width="0.9" stroke-linejoin="round" stroke-linecap="round"><path d="M0.6 5.6L5.7 0.6L10.8 5.6M2.2 4.6V11H9.2V4.6"/></g></svg>
<svg style="left:470.6px;top:32.4px;" width="11" height="11.6" viewBox="0 0 11 11.6"><g fill="none" stroke="#2b2b2b" stroke-width="0.85" stroke-linejoin="round" stroke-linecap="round"><rect x="3.2" y="1.4" width="6.4" height="6.4" stroke-width="0.8"/><rect x="2.2" y="0.4" width="2" height="2" fill="#cce4f7"/><rect x="8.6" y="0.4" width="2" height="2" fill="#cce4f7"/><rect x="2.2" y="6.8" width="2" height="2" fill="#cce4f7"/><rect x="8.6" y="6.8" width="2" height="2" fill="#cce4f7"/><path d="M6.4 3.4V5.8M5.2 4.6H7.6" stroke-width="0.5"/><path d="M0.6 4V11H7.6" stroke="#3a7fd0" stroke-width="0.7"/></g></svg>
<svg style="left:486.8px;top:32.6px;" width="10.6" height="11" viewBox="0 0 10.6 11"><g fill="none" stroke="#2b2b2b" stroke-width="0.85" stroke-linejoin="round" stroke-linecap="round"><path d="M3 7.6L8.4 1C9.2 0.2 10.6 1.4 9.8 2.2L4.4 8.8L2.4 9.4Z"/><path d="M0.6 8.4C0.6 6.4 3 6.4 3 8.2C3 10.4 7 10.6 9 8.4" stroke="#3a7fd0"/></g></svg>
<svg style="left:501px;top:32.4px;" width="12.4" height="11.6" viewBox="0 0 12.4 11.6"><g fill="none" stroke="#2b2b2b" stroke-width="0.85" stroke-linejoin="round" stroke-linecap="round"><path d="M3 9.6C0.4 9.6 -0.2 6 2.4 5.4C2 2.6 5 0.4 7.2 2.2C9.6 1 11.6 3.6 10.4 5.4" stroke-width="0.8"/><rect x="6.6" y="6" width="5" height="5" fill="#a9c8ee" stroke="#3a7fd0"/></g></svg>
<svg style="left:518.8px;top:32.4px;" width="12" height="11.6" viewBox="0 0 12 11.6"><g fill="none" stroke="#2b2b2b" stroke-width="0.85" stroke-linejoin="round" stroke-linecap="round"><path d="M7 0.6L11.4 4.6L8 11L3.4 7Z" fill="#a9c8ee" stroke="#3a7fd0"/><path d="M0.6 5L4 2.6L7.6 4.6L6 9L2 9.6Z" fill="#f0f0f0" stroke-width="0.8"/></g></svg>
<svg style="left:536.8px;top:36.8px;" width="5" height="2.8" viewBox="0 0 5 2.8"><path d="M0 0H5L2.5 2.8Z" fill="#222"/></svg>
<svg style="left:567.6px;top:32.8px;" width="11.4" height="11" viewBox="0 0 11.4 11"><g fill="none" stroke="#2b2b2b" stroke-width="0.85" stroke-linejoin="round" stroke-linecap="round"><path d="M0.6 0.6H8.6V3.4M0.6 0.6V8.6H4.6" stroke-width="0.9"/><path d="M4.4 0.8V8.4" stroke-width="0.5"/><path d="M5.6 3.4V10L7.4 8.4L8.6 10.8L9.6 10.2L8.4 8H10.6Z" fill="#cce4f7" stroke-width="0.7"/></g></svg>
<svg style="left:589.8px;top:32.4px;" width="12" height="11.6" viewBox="0 0 12 11.6"><g fill="none" stroke="#2b2b2b" stroke-width="0.85" stroke-linejoin="round" stroke-linecap="round"><rect x="0.6" y="2.4" width="10.8" height="6" stroke="#6aa5e6"/><circle cx="6" cy="1.4" r="1" fill="#333"/><path d="M6 2.6V6.4L4 10.8M6 6.4L8.2 10.8M3.6 5L6 3.6L8.4 5.4" stroke-width="0.8"/></g></svg>
<svg style="left:607.4px;top:32.4px;" width="12" height="11.6" viewBox="0 0 12 11.6"><g fill="none" stroke="#2b2b2b" stroke-width="0.85" stroke-linejoin="round" stroke-linecap="round"><ellipse cx="6" cy="4.4" rx="1.6" ry="3.4" stroke-width="0.8"/><path d="M6 7.8V11M4 9.6L6 11L8 9.6M2.4 4.4H0.8M1.8 3.4L0.8 4.4L1.8 5.4M9.6 4.4H11.2M10.2 3.4L11.2 4.4L10.2 5.4" stroke-width="0.6"/></g></svg>
<svg style="left:626px;top:32.6px;" width="12" height="11" viewBox="0 0 12 11"><g fill="none" stroke="#2b2b2b" stroke-width="0.85" stroke-linejoin="round" stroke-linecap="round"><path d="M2 10C-0.6 6 1.6 0.8 6 0.6C10.4 0.8 12.6 6 10 10" stroke-width="0.8"/><circle cx="6" cy="4.6" r="2.2" stroke-width="0.7"/><path d="M5 6.6V10M7 6.6V10M8.8 9.4L10 10.2L10.4 8.8" stroke-width="0.6"/></g></svg>
<svg style="left:648.8px;top:32.6px;" width="11.6" height="11.2" viewBox="0 0 11.6 11.2"><g fill="none" stroke="#2b2b2b" stroke-width="0.85" stroke-linejoin="round" stroke-linecap="round"><circle cx="5.8" cy="5.6" r="5" stroke-width="0.8"/><path d="M5.8 0.6V10.6M0.8 5.6H10.8M2.4 2.4C4.4 3.6 7.2 3.6 9.2 2.4M2.4 8.8C4.4 7.6 7.2 7.6 9.2 8.8" stroke-width="0.6"/><rect x="4" y="3.8" width="3.6" height="3.6" fill="#f0f0f0" stroke-width="0.7"/></g></svg>
<svg style="left:667.4px;top:32.4px;" width="12" height="11.8" viewBox="0 0 12 11.8"><g fill="none" stroke="#2b2b2b" stroke-width="0.85" stroke-linejoin="round" stroke-linecap="round"><path d="M3 0.5L3.8 2.6L6 3.4L3.8 4.2L3 6.4L2.2 4.2L0.2 3.4L2.2 2.6Z" fill="#333" stroke="none"/><circle cx="8.4" cy="8" r="3" stroke-width="0.8"/><path d="M8.4 4.4V6.6M8.4 7.6V9.4" stroke-width="0.7"/></g></svg>
<svg style="left:684.4px;top:32.2px;" width="13.2" height="12" viewBox="0 0 13.2 12"><g fill="none" stroke="#2b2b2b" stroke-width="0.85" stroke-linejoin="round" stroke-linecap="round"><path d="M0.5 3V0.5H3.4M9.8 0.5H12.7V3M12.7 9V11.5H9.8M3.4 11.5H0.5V9" stroke-width="0.8"/><path d="M2.6 6L6.6 2.4L10.6 6M3.8 5.2V9.6H9.4V5.2M5.6 9.6V7.2H7.6V9.6" stroke-width="0.7"/></g></svg>
<svg style="left:708.6px;top:32.2px;" width="11.4" height="12" viewBox="0 0 11.4 12"><g fill="none" stroke="#2b2b2b" stroke-width="0.85" stroke-linejoin="round" stroke-linecap="round"><rect x="3.2" y="0.6" width="5" height="5" rx="0.6" stroke-width="0.8"/><circle cx="5.7" cy="3.1" r="1" fill="#333"/><path d="M5.7 5.6V8.4L3 11.6M5.7 8.4L8.4 11.6M5.7 8.4V11.6M0.4 3.1H2.4M9 3.1H11" stroke-width="0.7"/></g></svg>
<svg style="left:727.4px;top:32px;" width="11.4" height="12.4" viewBox="0 0 11.4 12.4"><g fill="none" stroke="#2b2b2b" stroke-width="0.85" stroke-linejoin="round" stroke-linecap="round"><path d="M1 3C3.4 0.6 8 0.6 10.4 3M3 3.6V1.6M5.7 3V0.8M8.4 3.6V1.6" stroke="#3a7fd0" stroke-width="0.7"/><path d="M0.8 8.4L4.6 5.6L10.6 6.8L10.4 9.6L6.6 12L0.8 10.8ZM0.8 8.4L6.6 9.4L10.6 6.8M6.6 9.4V12" stroke-width="0.7"/></g></svg>
<svg style="left:931.5px;top:6.7px;" width="6.5" height="1" viewBox="0 0 6.5 1"><path d="M0 0.5H6.5" stroke="#b8b8b8" stroke-width="0.7"/></svg>
<svg style="left:961px;top:3.4px;" width="7.4" height="7.4" viewBox="0 0 7.4 7.4"><path d="M0.4 1.8H5.6V7H0.4ZM1.8 1.8V0.4H7V5.6H5.6" stroke="#a0a0a0" stroke-width="0.7" fill="none"/></svg>
<svg style="left:993px;top:3.6px;" width="7" height="7" viewBox="0 0 7 7"><path d="M0.3 0.3L6.7 6.7M6.7 0.3L0.3 6.7" stroke="#b0b0b0" stroke-width="0.7" fill="none"/></svg>
<svg style="left:991px;top:19.5px;" width="21" height="5" viewBox="0 0 21 5"><path d="M0.2 4.4H4.6" stroke="#333" stroke-width="0.8"/><path d="M7.6 1.6H11V4.6H7.6ZM8.8 1.6V0.4H12.2V3.4H11" stroke="#333" stroke-width="0.6" fill="none"/><path d="M15.6 0.8L19.4 4.6M19.4 0.8L15.6 4.6" stroke="#333" stroke-width="0.8"/></svg>
<svg style="left:1.4px;top:2.1px;" width="10" height="10" viewBox="0 0 10 10"><rect x="0" y="0" width="10" height="10" fill="#e4f3fb"/><path d="M0 0H3.8L1.6 10H0Z" fill="#5fcdf4"/><path d="M3.8 0H6C7.4 3 8.2 6.4 8.6 10H1.6Z" fill="#17a9e0"/><path d="M3.8 0L2.6 10H1.6Z" fill="#9be2fa"/></svg>
<span class="t" style="left:6.7px;top:51.10px;font-size:6.5px;line-height:7.80px;color:#2a2a2a;font-weight:700;letter-spacing:-0.466px;">Ogólne:</span>
<div style="left:2.6px;top:61.5px;width:0.7px;height:17.5px;background:#b0b0b0;"></div>
<div style="left:6.7px;top:70.8px;width:26px;height:12px;background:#e1e1e1;border:0.5px solid #cacaca;box-sizing:border-box;"></div>
<div style="left:34.4px;top:70.8px;width:26.2px;height:12px;background:#e1e1e1;border:0.5px solid #cacaca;box-sizing:border-box;"></div>
<div style="left:62.3px;top:70.5px;width:26.5px;height:12.4px;background:#cce4f7;border:0.8px solid #3c87d0;box-sizing:border-box;"></div>
<div style="left:89.8px;top:64px;width:32px;height:18.8px;background:#e1e1e1;border:0.6px solid #c4c4c4;box-sizing:border-box;"></div>
<svg style="left:12.2px;top:72px;" width="11.6" height="9.4" viewBox="0 0 11.6 9.4"><g fill="none" stroke="#2b2b2b" stroke-width="0.85" stroke-linejoin="round" stroke-linecap="round"><rect x="0.8" y="0.8" width="10" height="7.8" stroke-dasharray="1 1" stroke-width="0.7"/><path d="M3 6.8V3.2L8 2" stroke-width="1"/><rect x="2" y="2" width="2" height="2" fill="#333" stroke="none"/><path d="M7 1.2H9V3H7Z" fill="#333" stroke="none"/></g></svg>
<svg style="left:28.6px;top:74.7px;" width="2.8" height="4.2" viewBox="0 0 2.8 4.2"><path d="M0 0V4.2L2.8 2.1Z" fill="#222"/></svg>
<svg style="left:39.8px;top:72.4px;" width="12.4" height="8.6" viewBox="0 0 12.4 8.6"><g fill="none" stroke="#2b2b2b" stroke-width="0.85" stroke-linejoin="round" stroke-linecap="round"><rect x="0.5" y="0.8" width="9" height="7" stroke-dasharray="1.2 1" stroke-width="0.8"/><path d="M8.4 0.4V5.6L9.8 4.4L10.8 6.4L11.6 6L10.6 4H12.2Z" fill="#333" stroke-width="0.3"/></g></svg>
<svg style="left:56.6px;top:74.7px;" width="2.8" height="4.2" viewBox="0 0 2.8 4.2"><path d="M0 0V4.2L2.8 2.1Z" fill="#222"/></svg>
<svg style="left:71.2px;top:71.6px;" width="10" height="9.8" viewBox="0 0 10 9.8"><g fill="none" stroke="#2b2b2b" stroke-width="0.85" stroke-linejoin="round" stroke-linecap="round"><path d="M2.2 6.4L5.6 3C7 1.6 9.4 3.6 8 5.4L5.4 8C3.6 9.8 0.2 8 1.4 5.4" stroke-width="0.8"/><path d="M3.6 5L5.8 2.8" stroke-width="0.8"/><path d="M4.8 0.4L7 1.4L5.2 2.8Z" fill="#333" stroke-width="0.3"/></g></svg>
<svg style="left:100.8px;top:68.5px;" width="6.6" height="9.4" viewBox="0 0 6.6 9.4"><g fill="none" stroke="#2b2b2b" stroke-width="0.85" stroke-linejoin="round" stroke-linecap="round"><path d="M0.4 0.4V7.4L2.2 5.8L3.6 8.8L4.8 8.2L3.4 5.4H5.8Z" fill="#a2a2a2"/></g></svg>
<svg style="left:117.2px;top:70.30000000000001px;" width="2.8" height="4.2" viewBox="0 0 2.8 4.2"><path d="M0 0V4.2L2.8 2.1Z" fill="#222"/></svg>
<svg style="left:90.5px;top:94.9px;" width="11.4" height="10" viewBox="0 0 11.4 10"><g fill="none" stroke="#2b2b2b" stroke-width="0.85" stroke-linejoin="round" stroke-linecap="round"><path d="M0.5 9.5V0.5H4.4V3.2H10.9V9.5Z" fill="#fff" stroke="#3a7fd0" stroke-width="0.8"/></g></svg>
<svg style="left:263.7px;top:94.9px;" width="10" height="10.6" viewBox="0 0 10 10.6"><g fill="none" stroke="#2b2b2b" stroke-width="0.85" stroke-linejoin="round" stroke-linecap="round"><path d="M0.5 0.5H7.2V8.6H0.5ZM7.2 0.5L9.4 2V10L7.2 8.6" stroke-width="0.7" fill="#fff"/></g></svg>
<svg style="left:420.3px;top:97.8px;" width="5" height="5" viewBox="0 0 5 5"><path d="M0.6 0.6L4.4 4.4M4.4 0.6L0.6 4.4" stroke="#111" stroke-width="1.3" fill="none"/></svg>
<svg style="left:434px;top:96.3px;" width="11.4" height="8" viewBox="0 0 11.4 8"><g fill="none" stroke="#2b2b2b" stroke-width="0.85" stroke-linejoin="round" stroke-linecap="round"><rect x="0.4" y="0.4" width="10.4" height="7.2" rx="0.8" fill="#fff" stroke="#777" stroke-width="0.7"/><rect x="7" y="5" width="3.4" height="2.2" fill="#999" stroke="none"/></g></svg>
<div style="left:602.5px;top:93px;width:0.6px;height:13.5px;background:#c6c6c6;"></div>
<svg style="left:834px;top:94.6px;" width="17.6" height="10.4" viewBox="0 0 17.6 10.4"><g fill="none" stroke="#2b2b2b" stroke-width="0.85" stroke-linejoin="round" stroke-linecap="round"><path d="M0.6 2V9.6H17V5L12.6 0.6L8.4 5V9.6M8.4 5H17M4 4.4H8.4M0.6 2L2 0.8V3M2 3H4V9.6" stroke="#3a7fd0" stroke-width="0.8"/></g></svg>
<svg style="left:857px;top:98.6px;" width="3.6" height="2.2" viewBox="0 0 3.6 2.2"><path d="M0 0H3.6L1.8 2.2Z" fill="#333"/></svg>
<div style="left:465px;top:107.6px;width:20px;height:9px;background:#f1f1f1;"></div>
<div style="left:467.5px;top:111.8px;width:15px;height:0;border-top:1px dashed #f0b37a;"></div>
<div style="left:465px;top:497.2px;width:20px;height:9px;background:#f1f1f1;"></div>
<div style="left:467.5px;top:501.4px;width:15px;height:0;border-top:1px dashed #f0b37a;"></div>
<div style="left:90px;top:297px;width:9.8px;height:19px;background:#f4f4f4;"></div>
<div style="left:94.4px;top:299px;width:0;height:16px;border-left:1px dashed #f0b37a;"></div>
<svg style="left:871.8px;top:104.3px;" width="9" height="11" viewBox="0 0 9 11"><g fill="none" stroke="#2b2b2b" stroke-width="0.85" stroke-linejoin="round" stroke-linecap="round"><circle cx="3" cy="2.6" r="2.2" stroke-width="0.8"/><circle cx="5.2" cy="4.8" r="2.2" stroke-width="0.8"/><path d="M3 4.8V9.4H5.4M6.6 8H8.6M6.6 10H8.6" stroke-width="0.8"/></g></svg>
<svg style="left:888.2px;top:107.2px;" width="2.8" height="4.2" viewBox="0 0 2.8 4.2"><path d="M0 0V4.2L2.8 2.1Z" fill="#222"/></svg>
<svg style="left:937.8px;top:105px;" width="12.4" height="9.0" viewBox="0 0 12.4 9.0"><g fill="none" stroke="#2b2b2b" stroke-width="0.9" stroke-linejoin="round" stroke-linecap="round"><g transform="scale(1.0)"><path d="M0.5 8.5V3.6L4.6 0.5L7 2.6M0.5 8.5H11.8V4.8L7 2.6V8.5M7 4.8H11.8" /></g></g></svg>
<svg style="left:956.7px;top:105px;" width="12.0" height="8.8" viewBox="0 0 12.0 8.8"><g fill="none" stroke="#2b2b2b" stroke-width="0.9" stroke-linejoin="round" stroke-linecap="round"><g transform="scale(1.0)"><path d="M0.5 9.2V0.5H4.2V2.9H11.5V9.2ZM0.5 2H2V0.5" /></g></g></svg>
<svg style="left:977.5px;top:103.6px;" width="12.2" height="11" viewBox="0 0 12.2 11"><g fill="none" stroke="#2b2b2b" stroke-width="0.85" stroke-linejoin="round" stroke-linecap="round"><path d="M2.6 0.6H11.6V8.4H9M2.6 0.6C1 3 1 7 0.6 10.2H9C9.4 7 9.4 3 11.6 0.6M9 8.4V10.2M7.4 8.4H9" stroke-width="0.8"/><rect x="9.4" y="8.2" width="1.8" height="1.8" fill="#333" stroke="none"/></g></svg>
<svg style="left:997.4px;top:103.6px;" width="10.6" height="11" viewBox="0 0 10.6 11"><g fill="none" stroke="#2b2b2b" stroke-width="0.85" stroke-linejoin="round" stroke-linecap="round"><rect x="2" y="0.6" width="8" height="8.4" rx="1" stroke-width="0.8"/><path d="M0.6 3H2M0.6 6H2M3.4 10.4H10.4V3" stroke-width="0.8"/><path d="M10 2V10.2" stroke-width="1.3"/></g></svg>
<svg style="left:868.3px;top:126.6px;" width="5" height="3.2" viewBox="0 0 5 3.2"><path d="M0.4 0.4L2.5 2.6L4.6 0.4" stroke="#333" stroke-width="1.0" fill="none"/></svg>
<svg style="left:877.4px;top:123.5px;" width="11.408000000000001" height="8.280000000000001" viewBox="0 0 11.408000000000001 8.280000000000001"><g fill="none" stroke="#2b2b2b" stroke-width="0.8" stroke-linejoin="round" stroke-linecap="round"><g transform="scale(0.92)"><path d="M0.5 8.5V3.6L4.6 0.5L7 2.6M0.5 8.5H11.8V4.8L7 2.6V8.5M7 4.8H11.8" /></g></g></svg>
<svg style="left:875px;top:141.20000000000002px;" width="5" height="3.2" viewBox="0 0 5 3.2"><path d="M0.4 0.4L2.5 2.6L4.6 0.4" stroke="#333" stroke-width="1.0" fill="none"/></svg>
<svg style="left:884.2px;top:137.8px;" width="11.52" height="8.448" viewBox="0 0 11.52 8.448"><g fill="none" stroke="#2b2b2b" stroke-width="0.8" stroke-linejoin="round" stroke-linecap="round"><g transform="scale(0.96)"><path d="M0.5 9.2V0.5H4.2V2.9H11.5V9.2ZM0.5 2H2V0.5" /></g></g></svg>
<svg style="left:891.4px;top:152.70000000000002px;" width="11.040000000000001" height="8.096000000000002" viewBox="0 0 11.040000000000001 8.096000000000002"><g fill="none" stroke="#2b2b2b" stroke-width="0.8" stroke-linejoin="round" stroke-linecap="round"><g transform="scale(0.92)"><path d="M0.5 9.2V0.5H4.2V2.9H11.5V9.2ZM0.5 2H2V0.5" /></g></g></svg>
<svg style="left:891.4px;top:167.20000000000002px;" width="11.040000000000001" height="8.096000000000002" viewBox="0 0 11.040000000000001 8.096000000000002"><g fill="none" stroke="#2b2b2b" stroke-width="0.8" stroke-linejoin="round" stroke-linecap="round"><g transform="scale(0.92)"><path d="M0.5 9.2V0.5H4.2V2.9H11.5V9.2ZM0.5 2H2V0.5" /></g></g></svg>
<svg style="left:891.4px;top:181.8px;" width="11.040000000000001" height="8.096000000000002" viewBox="0 0 11.040000000000001 8.096000000000002"><g fill="none" stroke="#2b2b2b" stroke-width="0.8" stroke-linejoin="round" stroke-linecap="round"><g transform="scale(0.92)"><path d="M0.5 9.2V0.5H4.2V2.9H11.5V9.2ZM0.5 2H2V0.5" /></g></g></svg>
<svg style="left:891.4px;top:196.20000000000002px;" width="11.040000000000001" height="8.096000000000002" viewBox="0 0 11.040000000000001 8.096000000000002"><g fill="none" stroke="#2b2b2b" stroke-width="0.8" stroke-linejoin="round" stroke-linecap="round"><g transform="scale(0.92)"><path d="M0.5 9.2V0.5H4.2V2.9H11.5V9.2ZM0.5 2H2V0.5" /></g></g></svg>
<svg style="left:877px;top:213.2px;" width="3.2" height="4.8" viewBox="0 0 3.2 4.8"><path d="M0.4 0.4L2.6 2.4L0.4 4.4" stroke="#6a6a6a" stroke-width="0.9" fill="none"/></svg>
<svg style="left:877px;top:227.4px;" width="3.2" height="4.8" viewBox="0 0 3.2 4.8"><path d="M0.4 0.4L2.6 2.4L0.4 4.4" stroke="#6a6a6a" stroke-width="0.9" fill="none"/></svg>
<svg style="left:884.5px;top:211px;" width="11.4" height="9" viewBox="0 0 11.4 9"><g fill="none" stroke="#2b2b2b" stroke-width="0.8" stroke-linejoin="round" stroke-linecap="round"><path d="M0.5 8.5V3.4L5.7 0.5L10.9 3.4V8.5ZM0.5 3.4H10.9"/></g></svg>
<svg style="left:884.5px;top:225.4px;" width="11.4" height="9" viewBox="0 0 11.4 9"><g fill="none" stroke="#2b2b2b" stroke-width="0.8" stroke-linejoin="round" stroke-linecap="round"><path d="M0.5 8.5V3.4L5.7 0.5L10.9 3.4V8.5ZM0.5 3.4H10.9"/></g></svg>
<svg style="left:883.6px;top:239.8px;" width="12.8" height="9" viewBox="0 0 12.8 9"><g fill="none" stroke="#2b2b2b" stroke-width="0.8" stroke-linejoin="round" stroke-linecap="round"><rect x="0.5" y="0.5" width="11.8" height="8"/><path d="M3 8.5V3C3 1.6 5.4 1.6 5.4 3V8.5"/><rect x="7.4" y="2.4" width="2.8" height="3"/></g></svg>
<svg style="left:884.5px;top:252.5px;" width="11" height="6" viewBox="0 0 11 6"><g fill="none" stroke="#2b2b2b" stroke-width="0.8" stroke-linejoin="round" stroke-linecap="round"><path d="M0.5 6V1.5H8V0.5H10.5V6"/></g></svg>
<svg style="left:1004px;top:124.6px;" width="5.4" height="3.4" viewBox="0 0 5.4 3.4"><path d="M0.4 3L2.7 0.6L5 3" stroke="#333" stroke-width="0.8" fill="none"/></svg>
<svg style="left:1004px;top:438.4px;" width="5.4" height="3.4" viewBox="0 0 5.4 3.4"><path d="M0.4 0.4L2.7 2.8L5 0.4" stroke="#333" stroke-width="0.8" fill="none"/></svg>
<svg style="left:999.6px;top:455.5px;" width="8" height="9" viewBox="0 0 8 9"><path d="M1 0.6L7.4 8.4M7.4 0.6L1 8.4" stroke="#e8502a" stroke-width="1.3" fill="none"/></svg>
<svg style="left:897.5px;top:523px;" width="10.6" height="8" viewBox="0 0 10.6 8"><g fill="none" stroke="#555" stroke-width="0.9" stroke-linejoin="round" stroke-linecap="round"><rect x="0.5" y="0.5" width="8" height="6"/><rect x="2.4" y="2.6" width="8" height="6" fill="#f0f0f0"/></g></svg>
<svg style="left:90.4px;top:509.4px;" width="11" height="10" viewBox="0 0 11 10"><g fill="none" stroke="#2b2b2b" stroke-width="0.8" stroke-linejoin="round" stroke-linecap="round"><circle cx="6.6" cy="4.2" r="3.6"/><path d="M4 7L1 9.6"/><path d="M0.4 2.6L3 4.4L3.4 1.6" stroke-width="0.6"/></g></svg>
<svg style="left:105.6px;top:509.4px;" width="11" height="10" viewBox="0 0 11 10"><g fill="none" stroke="#c4c4c4" stroke-width="0.8" stroke-linejoin="round" stroke-linecap="round"><circle cx="4.4" cy="4.2" r="3.6"/><path d="M7 7L10 9.6"/><path d="M10.6 2.6L8 4.4L7.6 1.6" stroke-width="0.6"/></g></svg>
<svg style="left:121.5px;top:509.4px;" width="11" height="10" viewBox="0 0 11 10"><g fill="none" stroke="#2b2b2b" stroke-width="0.8" stroke-linejoin="round" stroke-linecap="round"><circle cx="4.4" cy="4.2" r="3.8"/><path d="M7.2 7L10.4 9.8" stroke-width="1"/><path d="M4.4 2.4V6M2.6 4.2H6.2" stroke-width="0.7"/></g></svg>
<svg style="left:140.4px;top:510.6px;" width="9.6" height="7" viewBox="0 0 9.6 7"><g fill="none" stroke="#2b2b2b" stroke-width="0.8" stroke-linejoin="round" stroke-linecap="round"><ellipse cx="4.8" cy="2.6" rx="4.2" ry="2.2"/><path d="M3.4 4.6L5.2 6.6M3.4 4.6L5.6 4" stroke-width="0.7"/></g></svg>
<svg style="left:157px;top:509.8px;" width="5.4" height="9" viewBox="0 0 5.4 9"><g fill="none" stroke="#2b2b2b" stroke-width="0.7" stroke-linejoin="round" stroke-linecap="round"><circle cx="2.7" cy="0.9" r="0.8" fill="#333" stroke="none"/><path d="M2.7 2V5.4L1 8.6M2.7 5.4L4.4 8.6M0.6 4L2.7 2.6L4.8 4"/></g></svg>
<svg style="left:173px;top:509.4px;" width="11" height="10" viewBox="0 0 11 10"><g fill="none" stroke="#2b2b2b" stroke-width="0.8" stroke-linejoin="round" stroke-linecap="round"><circle cx="4.4" cy="4.2" r="3.8"/><path d="M7.2 7L10.4 9.8" stroke-width="1"/><path d="M2.6 2.4L3.6 3.4M6.2 2.4L5.2 3.4M2.6 6L3.6 5M6.2 6L5.2 5" stroke-width="0.7"/></g></svg>
<svg style="left:240.6px;top:512.6999999999999px;" width="2.8" height="4.2" viewBox="0 0 2.8 4.2"><path d="M0 0V4.2L2.8 2.1Z" fill="#b0b0b0"/></svg>
<svg style="left:252.6px;top:511px;" width="8" height="7" viewBox="0 0 8 7"><g fill="none" stroke="#b8b8b8" stroke-width="0.7" stroke-linejoin="round" stroke-linecap="round"><path d="M0.6 4.6L3.6 0.6L6.4 2.6L3.4 6.6Z"/><path d="M5 6.4H7.6" /></g></svg>
<svg style="left:319.8px;top:512.6999999999999px;" width="2.8" height="4.2" viewBox="0 0 2.8 4.2"><path d="M0 0V4.2L2.8 2.1Z" fill="#b0b0b0"/></svg>
<svg style="left:330.8px;top:511.6px;" width="10.4" height="5.4" viewBox="0 0 10.4 5.4"><g fill="none" stroke="#2b2b2b" stroke-width="0.9" stroke-linejoin="round" stroke-linecap="round"><rect x="0.5" y="0.5" width="9.4" height="4.2" rx="0.6"/><path d="M2.6 4.6V3.2M5.2 4.6V3.2M7.8 4.6V3.2" stroke-width="0.6"/></g></svg>
<svg style="left:399.6px;top:512.6999999999999px;" width="2.8" height="4.2" viewBox="0 0 2.8 4.2"><path d="M0 0V4.2L2.8 2.1Z" fill="#222"/></svg>
<svg style="left:410px;top:510.4px;" width="10" height="9" viewBox="0 0 10 9"><g fill="none" stroke="#2b2b2b" stroke-width="0.7" stroke-linejoin="round" stroke-linecap="round"><path d="M0.6 3L3 0.6H9.4L7 3ZM0.6 5.2L7 5.2L9.4 2.8M0.6 7.4H7L9.4 5M0.6 3V8.4H7L9.4 6.2V0.6M7 3V8.4"/></g></svg>
<svg style="left:478.4px;top:512.6999999999999px;" width="2.8" height="4.2" viewBox="0 0 2.8 4.2"><path d="M0 0V4.2L2.8 2.1Z" fill="#222"/></svg>
<svg style="left:489.8px;top:510.6px;" width="9.4" height="8.4" viewBox="0 0 9.4 8.4"><g fill="none" stroke="#2b2b2b" stroke-width="0.6" stroke-linejoin="round" stroke-linecap="round"><rect x="0.4" y="0.4" width="8.6" height="7.6" fill="#333"/><path d="M1.4 2.4H3M4 2.4H5.6M6.6 2.4H8M1.4 4.2L3 6M3 4.2L1.4 6M4 4.2L5.6 6M5.6 4.2L4 6M6.6 4.2L8 6M8 4.2L6.6 6" stroke="#fff" stroke-width="0.5"/></g></svg>
<svg style="left:557.2px;top:512.6999999999999px;" width="2.8" height="4.2" viewBox="0 0 2.8 4.2"><path d="M0 0V4.2L2.8 2.1Z" fill="#222"/></svg>
<svg style="left:572.5px;top:510.4px;" width="5" height="9" viewBox="0 0 5 9"><g fill="none" stroke="#2b2b2b" stroke-width="0.8" stroke-linejoin="round" stroke-linecap="round"><path d="M0.6 0.6V4C0.6 6.6 4.4 6.6 4.4 4V0.6M2.5 6V8.6"/></g></svg>
<svg style="left:635.8px;top:512.6999999999999px;" width="2.8" height="4.2" viewBox="0 0 2.8 4.2"><path d="M0 0V4.2L2.8 2.1Z" fill="#222"/></svg>
<svg style="left:648px;top:511px;" width="9.6" height="7.4" viewBox="0 0 9.6 7.4"><g fill="none" stroke="#2b2b2b" stroke-width="0.8" stroke-linejoin="round" stroke-linecap="round"><rect x="0.5" y="0.5" width="8.6" height="6.4" rx="0.8"/><rect x="2.6" y="2.4" width="4.4" height="2.6" stroke-width="0.6"/></g></svg>
<svg style="left:715.4px;top:512.6999999999999px;" width="2.8" height="4.2" viewBox="0 0 2.8 4.2"><path d="M0 0V4.2L2.8 2.1Z" fill="#222"/></svg>
<svg style="left:727.6px;top:510.4px;" width="9.4" height="9" viewBox="0 0 9.4 9"><g fill="none" stroke="#2b2b2b" stroke-width="0.8" stroke-linejoin="round" stroke-linecap="round"><path d="M0.6 0.6H5V3M0.6 0.6V5.6H3.4"/><rect x="4.4" y="3.6" width="4.4" height="4.8"/><path d="M5.6 5.4H7.6M5.6 6.8H7.6" stroke-width="0.5"/></g></svg>
<svg style="left:795.2px;top:512.6999999999999px;" width="2.8" height="4.2" viewBox="0 0 2.8 4.2"><path d="M0 0V4.2L2.8 2.1Z" fill="#222"/></svg>
</body></html>
